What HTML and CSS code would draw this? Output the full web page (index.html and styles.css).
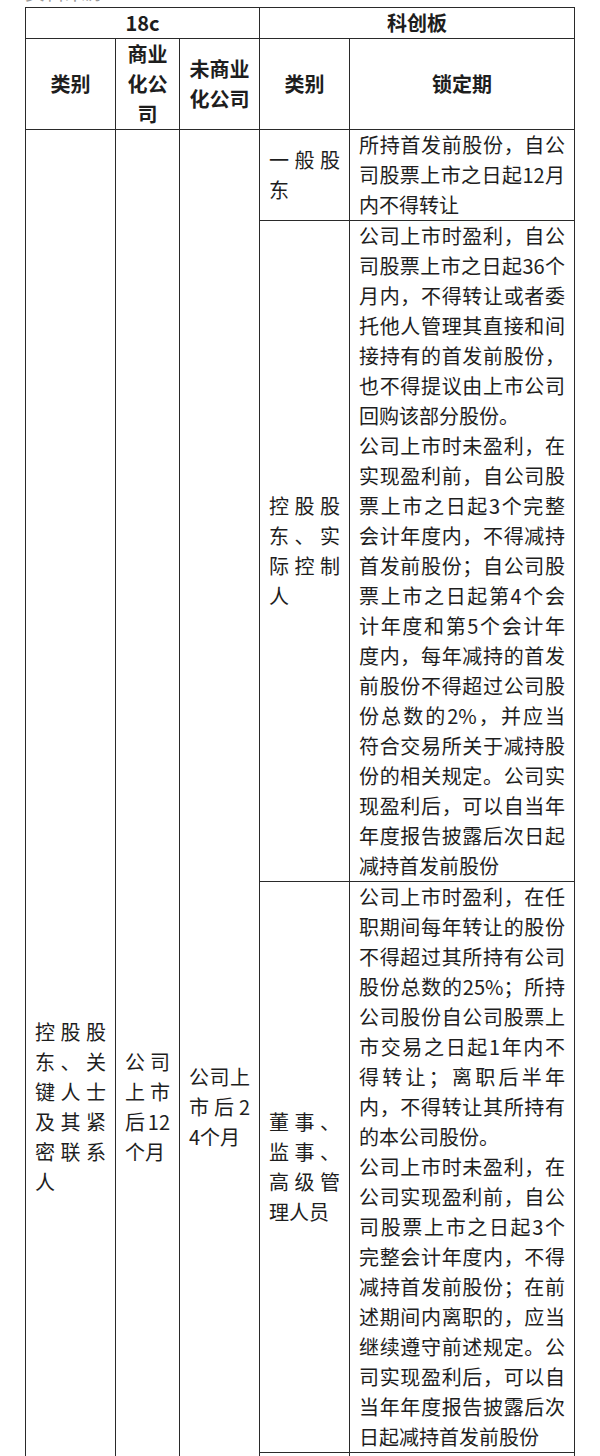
FILE: index.html
```html
<!DOCTYPE html>
<html lang="zh-CN">
<head>
<meta charset="utf-8">
<title>18c 与 科创板 锁定期对比</title>
<link rel="stylesheet" href="styles.css">
</head>
<body>
<div class="page">
  <div class="caption">资料来源：</div>
  <table class="lock-table">
    <colgroup>
      <col class="c1">
      <col class="c2">
      <col class="c3">
      <col class="c4">
      <col class="c5">
    </colgroup>
    <thead>
      <tr>
        <th colspan="3">18c</th>
        <th colspan="2">科创板</th>
      </tr>
      <tr>
        <th>类别</th>
        <th>商业化公司</th>
        <th>未商业化公司</th>
        <th>类别</th>
        <th>锁定期</th>
      </tr>
    </thead>
    <tbody>
      <tr>
        <td rowspan="4">控股股东、关键人士及其紧密联系人</td>
        <td rowspan="4">公司上市后12个月</td>
        <td rowspan="4">公司上市后24个月</td>
        <td>一般股东</td>
        <td>所持首发前股份，自公司股票上市之日起12月内不得转让</td>
      </tr>
      <tr>
        <td>控股股东、实际控制人</td>
        <td><p>公司上市时盈利，自公司股票上市之日起36个月内，不得转让或者委托他人管理其直接和间接持有的首发前股份，也不得提议由上市公司回购该部分股份。</p><p>公司上市时未盈利，在实现盈利前，自公司股票上市之日起3个完整会计年度内，不得减持首发前股份；自公司股票上市之日起第4个会计年度和第5个会计年度内，每年减持的首发前股份不得超过公司股份总数的2%，并应当符合交易所关于减持股份的相关规定。公司实现盈利后，可以自当年年度报告披露后次日起减持首发前股份</p></td>
      </tr>
      <tr>
        <td>董事、监事、高级管理人员</td>
        <td><p>公司上市时盈利，在任职期间每年转让的股份不得超过其所持有公司股份总数的25%；所持公司股份自公司股票上市交易之日起1年内不得转让；离职后半年内，不得转让其所持有的本公司股份。</p><p>公司上市时未盈利，在公司实现盈利前，自公司股票上市之日起3个完整会计年度内，不得减持首发前股份；在前述期间内离职的，应当继续遵守前述规定。公司实现盈利后，可以自当年年度报告披露后次日起减持首发前股份</p></td>
      </tr>
      <tr>
        <td>核心技术人员</td>
        <td><p>公司上市时盈利，自公司股票上市之日起12个月内和离职后6个月内不得转让本公司首发前股份；自所持首发前股份限售期满之日起4年内，每年转让的首发前股份不得超过上市时所持公司首发前股份总数的25%，减持比例可以累积使用。</p><p>公司上市时未盈利，在公司实现盈利前，自公司股票上市之日起3个完整会计年度内，不得减持首发前股份；在前述期间内离职的，应当继续遵守前述规定。公司实现盈利后，可以自当年年度报告披露后次日起减持首发前股份</p></td>
      </tr>
    </tbody>
  </table>
</div>
</body>
</html>
```
FILE: styles.css
```css
html, body {
  margin: 0;
  padding: 0;
  background: #ffffff;
}

body {
  font-family: "Noto Sans CJK SC", "Noto Sans", sans-serif;
  color: #1e1e1e;
}

.page {
  padding: 0 25px;
}

.caption {
  margin-top: -23px;
  height: 30px;
  font-size: 20px;
  line-height: 30px;
  color: #9a9a9a;
}

.lock-table {
  width: 550px;
  table-layout: fixed;
  border-collapse: collapse;
  font-size: 20px;
  line-height: 30px;
}

.lock-table .c1 { width: 90px; }
.lock-table .c2 { width: 64px; }
.lock-table .c3 { width: 80px; }
.lock-table .c4 { width: 90px; }

.lock-table th,
.lock-table td {
  border: 1px solid #2a2a2a;
  padding: 0 9px;
  vertical-align: middle;
  word-break: break-all;
}

.lock-table th {
  font-weight: 700;
  text-align: center;
}

.lock-table td {
  font-weight: 400;
  text-align: justify;
}

.lock-table td p {
  margin: 0;
}
```
